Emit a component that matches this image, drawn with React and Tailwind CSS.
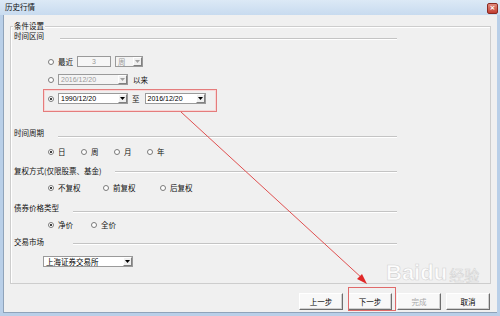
import React from "react";

const num = "font-['Liberation_Sans',Arial,sans-serif] text-[7px] leading-none";

function Radio({ checked, label, className = "" }) {
  return (
    <div className={`flex items-center gap-[4px] ${className}`}>
      <span className="w-[6px] h-[6px] rounded-full border border-[#7a7a7a] bg-white flex items-center justify-center shrink-0">
        {checked && <span className="w-[2px] h-[2px] rounded-full bg-black" />}
      </span>
      {label && <span className="whitespace-nowrap">{label}</span>}
    </div>
  );
}

function Arrow({ disabled }) {
  return (
    <span className="w-[9px] h-[9px] flex items-center justify-center bg-[#f0f0f0] border border-t-white border-l-white border-r-[#808080] border-b-[#808080] shrink-0">
      <svg width="5" height="3" viewBox="0 0 5 3">
        <path d="M0 0H5L2.5 3Z" fill={disabled ? "#a0a0a0" : "#000"} />
      </svg>
    </span>
  );
}

function Combo({ value, w, disabled, cjk, className = "" }) {
  return (
    <div
      className={`${w} h-[11px] flex items-center border border-[#9a9a9a] ${
        disabled ? "bg-[#f4f4f4] text-[#9a9a9a]" : "bg-white text-black"
      } ${className}`}
    >
      <span className={`flex-1 pl-[2px] whitespace-nowrap ${cjk ? "text-[7.5px] leading-none" : num}`}>
        {value}
      </span>
      <Arrow disabled={disabled} />
    </div>
  );
}

function Header({ title, textW, lineW, lineMt, className = "" }) {
  return (
    <div className={`flex h-[10px] leading-[10px] ml-[3px] ${className}`}>
      <span className={`${textW} whitespace-nowrap`}>{title}</span>
      <div className={`${lineW} ${lineMt} h-[2px] border-t border-[#c4c4c4] border-b border-b-white`} />
    </div>
  );
}

function Btn({ children, disabled }) {
  return (
    <div
      className={`w-[44px] h-[17px] flex items-center justify-center border border-t-white border-l-white border-r-[#6e6e6e] border-b-[#6e6e6e] bg-[#f8f8f8] shadow-[inset_-1px_-1px_0_#cfcfcf] ${
        disabled ? "text-[#a8a8a8]" : "text-black"
      }`}
    >
      {children}
    </div>
  );
}

export default function App() {
  return (
    <div className="relative w-[500px] h-[316px] overflow-hidden bg-[#b9cfe8] flex flex-col font-['Noto_Sans_CJK_SC','Noto_Sans',sans-serif] text-[7.5px] text-[#111]">

      {/* TITLE */}
      <div className="h-[15px] flex items-start bg-gradient-to-b from-[#dce9f6] to-[#c8dbef]">
        <span className="ml-[5px] mt-[2px] leading-[10px]">历史行情</span>
        <div className="ml-auto mr-[2px] mt-[3px] w-[11px] h-[11px] rounded-[2px] bg-gradient-to-b from-[#e08a7e] to-[#c23b2f] border border-[#8a2a22] flex items-center justify-center text-white text-[7px] leading-none font-['DejaVu_Sans',sans-serif] font-bold">
          ×
        </div>
      </div>

      {/* BODY */}
      <div className="flex-1 mx-[3px] mb-[3px] bg-[#f0f0f0] border-l border-b border-[#8fa3ba] flex flex-col">

        {/* GROUP */}
        <div className="ml-[6px] mt-[11px] w-[481px] h-[258px] border border-[#cdcdcd] shadow-[inset_1px_1px_0_#ffffff] flex flex-col">

          <div className="-mt-[6px] ml-[2px] px-[1px] w-fit h-[10px] leading-[10px] bg-[#f0f0f0]">条件设置</div>

          <Header title="时间区间" textW="w-[46px]" lineW="w-[337px]" lineMt="mt-[7px]" />

          {/* row 1 */}
          <div className="mt-[15px] ml-[37px] flex items-center h-[11px]">
            <Radio label="最近" />
            <div className={`ml-[4px] w-[34px] h-[11px] border border-[#9a9a9a] bg-[#f6f6f6] text-[#9a9a9a] flex items-center justify-center ${num}`}>
              3
            </div>
            <Combo value="周" w="w-[28px]" disabled cjk className="ml-[4px]" />
          </div>

          {/* row 2 */}
          <div className="mt-[7px] ml-[37px] flex items-center h-[11px]">
            <Radio />
            <Combo value="2016/12/20" w="w-[70px]" disabled className="ml-[4px]" />
            <span className="ml-[5px]">以来</span>
          </div>

          {/* row 3 */}
          <div className="mt-[4px] ml-[32px] w-[174px] h-[23px] border border-[#e57c7c] shadow-[inset_0_0_0_1px_#f7d6d6] pt-[3px] pl-[4px]">
            <div className="flex items-center h-[11px]">
              <Radio checked />
              <Combo value="1990/12/20" w="w-[70px]" className="ml-[4px]" />
              <span className="ml-[4px]">至</span>
              <Combo value="2016/12/20" w="w-[61px]" className="ml-[5px]" />
            </div>
          </div>

          <Header title="时间周期" textW="w-[44px]" lineW="w-[339px]" lineMt="mt-[8px]" className="mt-[16px]" />

          <div className="mt-[9px] ml-[37px] flex items-center h-[10px]">
            <Radio checked label="日" className="w-[33px]" />
            <Radio label="周" className="w-[33px]" />
            <Radio label="月" className="w-[33px]" />
            <Radio label="年" className="w-[33px]" />
          </div>

          <Header title="复权方式(仅限股票、基金)" textW="w-[101px]" lineW="w-[282px]" lineMt="mt-[5px]" className="mt-[9px]" />

          <div className="mt-[7px] ml-[37px] flex items-center h-[10px]">
            <Radio checked label="不复权" className="w-[55px]" />
            <Radio label="前复权" className="w-[57px]" />
            <Radio label="后复权" />
          </div>

          <Header title="债券价格类型" textW="w-[59px]" lineW="w-[324px]" lineMt="mt-[8px]" className="mt-[10px]" />

          <div className="mt-[7px] ml-[37px] flex items-center h-[10px]">
            <Radio checked label="净价" className="w-[43px]" />
            <Radio label="全价" />
          </div>

          <Header title="交易市场" textW="w-[59px]" lineW="w-[324px]" lineMt="mt-[6px]" className="mt-[7px]" />

          <Combo value="上海证券交易所" w="w-[90px]" cjk className="mt-[9px] ml-[32px]" />
        </div>

        {/* BUTTONS */}
        <div className="mt-[9px] flex justify-end gap-[5px] pr-[7px]">
          <Btn>上一步</Btn>
          <div className="relative">
            <Btn>下一步</Btn>
            <span className="absolute -top-[6px] left-0 -right-[4px] -bottom-[1px] border border-[#e06a6a]" />
          </div>
          <Btn disabled>完成</Btn>
          <Btn>取消</Btn>
        </div>
      </div>

      {/* watermark */}
      <div className="absolute left-[386px] top-[262px] flex items-end gap-[2px] text-white opacity-90 [-webkit-text-stroke:0.6px_#d2d2d2] pointer-events-none">
        <span className="font-['Liberation_Sans',sans-serif] font-bold text-[22px] leading-none">Baidu</span>
        <span className="text-[15px] leading-none mb-[2px]">经验</span>
      </div>

      {/* annotation arrow */}
      <svg className="absolute left-0 top-0 pointer-events-none" width="500" height="316">
        <line x1="181" y1="112" x2="363" y2="279" stroke="#e05050" strokeWidth="1" />
        <path d="M367 284 L357 279 L362 274 Z" fill="#e02828" />
      </svg>
    </div>
  );
}
